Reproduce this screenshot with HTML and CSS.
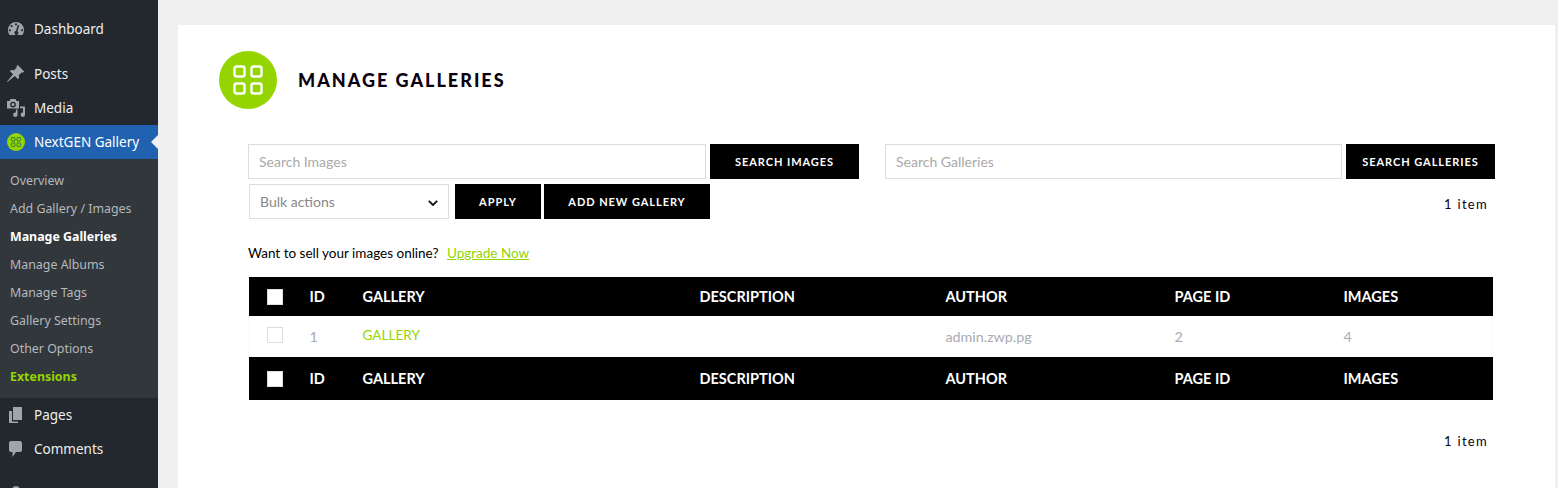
FILE: index.html
```html
<!DOCTYPE html>
<html lang="en">

<head>
  <meta charset="UTF-8" />
  <meta name="viewport" content="width=device-width, initial-scale=1" />
  <title>Manage Galleries</title>
  <link rel="stylesheet" href="styles.css">
</head>

<body>

  <!-- Admin menu -->
  <div class="sidebar">
    <a class="menu-item low" href="#">
      <svg class="menu-icon" viewBox="0 0 20 20"><path fill-rule="evenodd" d="M10 4a8 8 0 0 0-8 8c0 1.900.6 3.600 1.700 5h12.600c1.100-1.400 1.700-3.100 1.700-5a8 8 0 0 0-8-8zM10 5.200a1.100 1.100 0 1 1 0 2.200 1.100 1.100 0 0 1 0-2.200zM5.600 7a1.100 1.100 0 1 1 0 2.200 1.100 1.100 0 0 1 0-2.200zM3.900 11.200a1.100 1.100 0 1 1 0 2.200 1.100 1.100 0 0 1 0-2.200zM16.100 11.200a1.100 1.100 0 1 1 0 2.200 1.100 1.100 0 0 1 0-2.200zM13.200 7.200l-1.700 6.200a1.900 1.900 0 1 1-1.500-.3l1.800-6.300z"/></svg>
      <span>Dashboard</span>
    </a>
    <div class="menu-sep"></div>
    <a class="menu-item low" href="#">
      <svg class="menu-icon" viewBox="0 0 20 20"><path d="M11.800 2l6.400 6.400-1.300 1.300-1-.5-3.200 3.100c.6 1.500.3 3-.6 4l-3.300-3.300-7.300 6-.4-.4 6-7.300-3.300-3.300c1-.9 2.500-1.200 4-.6l3.100-3.200-.5-1z"/></svg>
      <span>Posts</span>
    </a>
    <a class="menu-item low" href="#">
      <svg class="menu-icon" viewBox="0 0 20 20"><path fill-rule="evenodd" d="M1 4h2.500l1-2h5l1 2H13v7.500H1zM7 4.700a2.900 2.900 0 1 0 0 5.800 2.900 2.900 0 0 0 0-5.800z"/><circle cx="7" cy="7.600" r="1.500"/><path d="M14 9.500h5v8.200a2.200 2.200 0 1 1-2-2.200v-4.300h-3zM11.500 12.500v5.200a2.200 2.200 0 1 1-1.600-2.100v-3.100z"/></svg>
      <span>Media</span>
    </a>
    <a class="menu-item current" href="#">
      <svg class="menu-icon" viewBox="0 0 20 20"><circle cx="10" cy="10" r="9" fill="#94d500"/><g fill="none" stroke="#2c7a4a" stroke-width="1"><rect x="5.500" y="5.500" width="3.500" height="3.500" rx=".8"/><rect x="11" y="5.500" width="3.500" height="3.500" rx=".8"/><rect x="5.500" y="11" width="3.500" height="3.500" rx=".8"/><rect x="11" y="11" width="3.500" height="3.500" rx=".8"/></g></svg>
      <span>NextGEN Gallery</span>
    </a>
    <div class="submenu">
      <a href="#">Overview</a>
      <a href="#">Add Gallery / Images</a>
      <a class="active" href="#">Manage Galleries</a>
      <a href="#">Manage Albums</a>
      <a href="#">Manage Tags</a>
      <a href="#">Gallery Settings</a>
      <a href="#">Other Options</a>
      <a class="extensions" href="#">Extensions</a>
    </div>
    <a class="menu-item" href="#">
      <svg class="menu-icon" viewBox="0 0 20 20"><path d="M7 2h9v13H7zM3 6h3v10.500h6V18H3z"/></svg>
      <span>Pages</span>
    </a>
    <a class="menu-item" href="#">
      <svg class="menu-icon" viewBox="0 0 20 20"><path d="M5 2h9c1.100 0 2 .9 2 2v7c0 1.100-.9 2-2 2h-4l-3.500 5v-5H5c-1.100 0-2-.9-2-2V4c0-1.100.9-2 2-2z"/></svg>
      <span>Comments</span>
    </a>
    <div class="menu-sep"></div>
    <a class="menu-item" href="#">
      <svg class="menu-icon" viewBox="0 0 20 20"><circle cx="10" cy="6" r="4"/></svg>
    </a>
  </div>

  <!-- Main content -->
  <div class="main">
    <div class="card">

      <div class="page-head">
        <div class="logo">
          <svg viewBox="0 0 30 30" width="30" height="30" fill="none" stroke="#fff" stroke-width="2.400">
            <rect x="1.500" y="1.500" width="10" height="10" rx="2" />
            <rect x="18.500" y="1.500" width="10" height="10" rx="2" />
            <rect x="1.500" y="18.500" width="10" height="10" rx="2" />
            <rect x="18.500" y="18.500" width="10" height="10" rx="2" />
          </svg>
        </div>
        <h1>Manage Galleries</h1>
      </div>

      <div class="search-row">
        <div class="search-box">
          <input type="text" placeholder="Search Images" />
          <button class="btn">Search Images</button>
        </div>
        <div class="search-box">
          <input type="text" placeholder="Search Galleries" />
          <button class="btn">Search Galleries</button>
        </div>
      </div>

      <div class="actions-row">
        <div class="select">
          <span>Bulk actions</span>
          <svg viewBox="0 0 10 6" width="10" height="6" fill="none" stroke="#111" stroke-width="1.800"><path d="M.8.8L5 5l4.200-4.200" /></svg>
        </div>
        <button class="btn btn-apply">Apply</button>
        <button class="btn btn-add">Add New Gallery</button>
        <span class="count">1 item</span>
      </div>

      <p class="upsell">Want to sell your images online? <a href="#">Upgrade Now</a></p>

      <table class="galleries">
        <colgroup>
          <col class="c-check">
          <col class="c-id">
          <col class="c-title">
          <col class="c-desc">
          <col class="c-author">
          <col class="c-page">
          <col class="c-images">
        </colgroup>
        <thead>
          <tr>
            <th><span class="check"></span></th>
            <th>ID</th>
            <th>Gallery</th>
            <th>Description</th>
            <th>Author</th>
            <th>Page ID</th>
            <th>Images</th>
          </tr>
        </thead>
        <tbody>
          <tr>
            <td class="raised"><span class="check"></span></td>
            <td>1</td>
            <td class="raised link-cell"><a href="#">GALLERY</a></td>
            <td></td>
            <td>admin.zwp.pg</td>
            <td>2</td>
            <td>4</td>
          </tr>
        </tbody>
        <tfoot>
          <tr>
            <th><span class="check"></span></th>
            <th>ID</th>
            <th>Gallery</th>
            <th>Description</th>
            <th>Author</th>
            <th>Page ID</th>
            <th>Images</th>
          </tr>
        </tfoot>
      </table>

      <div class="bottom-count"><span class="count">1 item</span></div>

    </div>
  </div>

</body>

</html>
```
FILE: styles.css
```css
* {
  box-sizing: border-box;
}

body {
  margin: 0;
  height: 488px;
  overflow: hidden;
  display: flex;
  background: #f0f0f1;
  font-family: 'Lato', sans-serif;
  color: #000;
}

/* Sidebar */
.sidebar {
  width: 158px;
  flex-shrink: 0;
  height: 488px;
  overflow: hidden;
  padding-top: 11px;
  background: #23282f;
  font-family: 'Noto Sans', sans-serif;
}

.menu-item {
  display: flex;
  align-items: center;
  gap: 8px;
  height: 34px;
  padding-left: 6px;
  color: #eee;
  font-size: 13.5px;
  text-decoration: none;
  white-space: nowrap;
}

.menu-item.low span {
  padding-top: 2px;
}

.menu-icon {
  width: 20px;
  height: 20px;
  flex-shrink: 0;
  fill: #a0a5aa;
}

.menu-sep {
  height: 11px;
}

.menu-item.current {
  position: relative;
  margin-top: 1px;
  padding-bottom: 1px;
  background: #2162b0;
  color: #fff;
}

/* little arrow pointing at the content */
.menu-item.current::after {
  content: "";
  position: absolute;
  right: 0;
  top: 10px;
  border: 7px solid transparent;
  border-left-width: 0;
  border-right-color: #f0f0f1;
}

.submenu {
  display: flex;
  flex-direction: column;
  padding: 8px 0 7px;
  background: #32373c;
}

.submenu a {
  height: 28px;
  line-height: 28px;
  padding-left: 10px;
  color: #b4b9be;
  font-size: 12.4px;
  text-decoration: none;
  white-space: nowrap;
}

.submenu a.active {
  color: #fff;
  font-weight: 700;
}

.submenu a.extensions {
  color: #94d500;
  font-weight: 700;
}

/* Main */
.main {
  flex: 1;
  padding: 25px 3px 0 20px;
}

.card {
  height: 463px;
  padding: 26px 60px 0 41px;
  background: #fff;
}

.page-head {
  display: flex;
  align-items: center;
  gap: 21px;
  margin-bottom: 35px;
}

.logo {
  width: 58px;
  height: 58px;
  display: flex;
  align-items: center;
  justify-content: center;
  border-radius: 50%;
  background: #94d500;
}

h1 {
  margin: 0;
  font-size: 18px;
  font-weight: 900;
  letter-spacing: 2px;
  text-transform: uppercase;
  color: #0a0010;
}

.search-row {
  display: flex;
  justify-content: space-between;
  margin-left: 29px;
}

.search-box {
  display: flex;
  gap: 4px;
}

.search-box input {
  width: 458px;
  height: 35px;
  padding: 0 10px;
  border: 1px solid #ddd;
  background: #fff;
  font-family: 'Lato', sans-serif;
  font-size: 14px;
  outline: none;
}

.search-box + .search-box input {
  width: 457px;
}

.search-box input::placeholder {
  color: #aaa;
  opacity: 1;
}

.btn {
  height: 35px;
  border: none;
  background: #000;
  color: #fff;
  font-family: 'Lato', sans-serif;
  font-size: 11px;
  font-weight: 700;
  letter-spacing: 0.95px;
  text-transform: uppercase;
  cursor: pointer;
}

.search-box .btn {
  width: 149px;
}

.actions-row {
  display: flex;
  align-items: center;
  margin: 5px 0 0 30px;
  padding-right: 7px;
}

.select {
  width: 200px;
  height: 35px;
  display: flex;
  align-items: center;
  justify-content: space-between;
  padding: 0 10px;
  border: 1px solid #ddd;
  color: #888;
  font-size: 14px;
}

.select svg {
  margin-top: 2px;
}

.btn-apply {
  width: 86px;
  margin-left: 6px;
}

.btn-add {
  width: 166px;
  margin-left: 3px;
}

.count {
  margin-left: auto;
  padding-top: 4px;
  font-size: 13px;
  letter-spacing: 1.3px;
  color: #0a0010;
}

.upsell {
  margin: 26px 0 0 29px;
  font-size: 13.5px;
  line-height: 16px;
}

.upsell a {
  margin-left: 5px;
  color: #94d500;
}

/* Table */
.galleries {
  width: 1244px;
  margin: 16px 0 0 29px;
  table-layout: fixed;
  border-collapse: collapse;
}

.c-check { width: 51px; }
.c-id { width: 53px; }
.c-title { width: 337px; }
.c-desc { width: 246px; }
.c-author { width: 229px; }
.c-page { width: 169px; }
.c-images { width: 159px; }

.galleries th {
  height: 39px;
  padding: 0 0 0 10px;
  background: #000;
  color: #fff;
  font-size: 14.5px;
  font-weight: 700;
  text-align: left;
  text-transform: uppercase;
}

.galleries tfoot th {
  height: 43px;
}

.galleries td {
  height: 41px;
  padding: 0 0 0 10px;
  border-left: 1px solid #fbfbf0;
  color: #a9abb4;
  font-size: 14.3px;
}

.galleries td + td {
  border-left: none;
}

.galleries td:last-child {
  border-right: 1px solid #fbfbf0;
}

.galleries th:first-child,
.galleries td:first-child {
  padding-left: 18px;
}

.galleries td.raised {
  padding-bottom: 3px;
}

.galleries td.link-cell {
  padding-bottom: 4px;
  font-size: 13.6px;
}

.galleries a {
  color: #94d500;
  text-decoration: none;
}

.check {
  display: block;
  width: 16px;
  height: 16px;
  background: #fff;
  border: 1px solid #ddd;
}

.bottom-count {
  display: flex;
  margin: 29px 0 0 29px;
  padding-right: 7px;
}
```
